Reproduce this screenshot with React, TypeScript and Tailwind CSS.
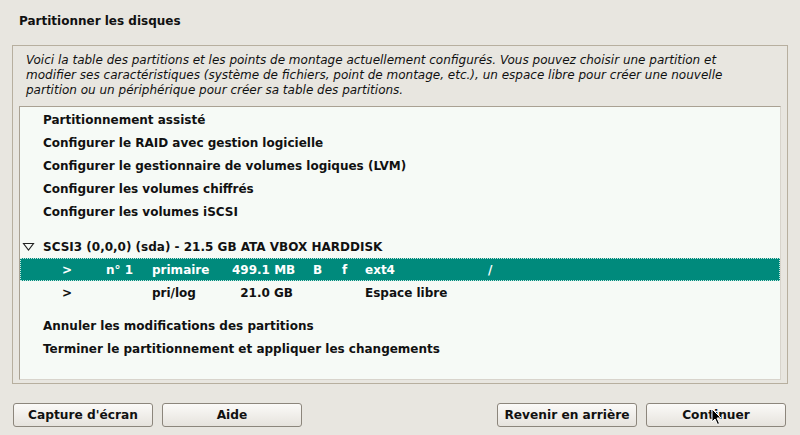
import React from 'react'

const menuTop = [
  'Partitionnement assisté',
  'Configurer le RAID avec gestion logicielle',
  'Configurer le gestionnaire de volumes logiques (LVM)',
  'Configurer les volumes chiffrés',
  'Configurer les volumes iSCSI',
]

const menuBottom = [
  'Annuler les modifications des partitions',
  'Terminer le partitionnement et appliquer les changements',
]

function Item({ label }: { label: string }) {
  return (
    <div className="h-[23px] flex items-center pl-[23px] whitespace-nowrap">{label}</div>
  )
}

function PartRow({
  selected,
  num,
  type,
  size,
  boot,
  fmt,
  fs,
  mount,
}: {
  selected?: boolean
  num: string
  type: string
  size: string
  boot: string
  fmt: string
  fs: string
  mount: string
}) {
  return (
    <div
      className={
        selected
          ? 'h-[23px] flex items-center whitespace-nowrap bg-[#008a7c] text-white outline-1 outline-dotted outline-[#c8e8e2] -outline-offset-1'
          : 'h-[23px] flex items-center whitespace-nowrap'
      }
    >
      <span className="w-[86px] pl-[42px]">&gt;</span>
      <span className="w-[46px]">{num}</span>
      <span className="w-[80px]">{type}</span>
      <span className="w-[61px] text-right">{size}</span>
      <span className="w-[20px]" />
      <span className="w-[29px]">{boot}</span>
      <span className="w-[23px]">{fmt}</span>
      <span className="w-[123px]">{fs}</span>
      <span>{mount}</span>
    </div>
  )
}

function Button({ label }: { label: string }) {
  return (
    <button className="w-[140px] h-[24px] rounded-[3px] border border-[#8c867c] bg-gradient-to-b from-[#fbfaf8] to-[#e6e3dd] text-[12.2px] font-bold text-[#111] flex items-center justify-center">
      {label}
    </button>
  )
}

export default function App() {
  return (
    <div className="w-[800px] h-[435px] bg-[#e8e6e0] font-['DejaVu_Sans',sans-serif] text-[#111] relative overflow-hidden">
      <div className="h-[45px] pl-[19px] pt-[12px] text-[12px] font-bold">Partitionner les disques</div>

      <div className="mx-[12px] w-[776px] h-[339px] border border-[#b7af9f] flex flex-col px-[6px] pb-[3px]">
        <p className="italic text-[12px] leading-[15px] pl-[7px] pt-[7px] h-[60px] whitespace-nowrap">
          Voici la table des partitions et les points de montage actuellement configurés. Vous pouvez choisir une partition et
          <br />
          modifier ses caractéristiques (système de fichiers, point de montage, etc.), un espace libre pour créer une nouvelle
          <br />
          partition ou un périphérique pour créer sa table des partitions.
        </p>

        <div className="flex-1 border border-[#a9a193] border-r-[#d8d4cc] border-b-[#d8d4cc] bg-[#f6faf6] text-[12px] font-bold pt-[1px]">
          {menuTop.map((m) => (
            <Item key={m} label={m} />
          ))}
          <div className="h-[12px]" />
          <div className="h-[23px] flex items-center whitespace-nowrap">
            <svg width="23" height="12" viewBox="0 0 23 12" className="shrink-0">
              <path d="M3.5 2.5 L13.5 2.5 L8.5 9 Z" fill="none" stroke="#222" strokeWidth="1.1" />
            </svg>
            <span>SCSI3 (0,0,0) (sda) - 21.5 GB ATA VBOX HARDDISK</span>
          </div>
          <PartRow selected num="n° 1" type="primaire" size="499.1 MB" boot="B" fmt="f" fs="ext4" mount="/" />
          <PartRow num="" type="pri/log" size="21.0 GB" boot="" fmt="" fs="Espace libre" mount="" />
          <div className="h-[10px]" />
          {menuBottom.map((m) => (
            <Item key={m} label={m} />
          ))}
        </div>
      </div>

      <div className="flex items-center px-[13px] pt-[19px]">
        <div className="flex gap-[9px]">
          <Button label="Capture d'écran" />
          <Button label="Aide" />
        </div>
        <div className="flex gap-[9px] ml-auto mr-[1px]">
          <Button label="Revenir en arrière" />
          <Button label="Continuer" />
        </div>
      </div>

      {/* mouse pointer */}
      <svg width="12" height="18" viewBox="0 0 12 18" className="absolute left-[711px] top-[408px]">
        <path d="M1 1 L1 14 L4 11 L6.5 16.5 L8.5 15.5 L6 10 L10 10 Z" fill="#000" stroke="#fff" strokeWidth="1" />
      </svg>
    </div>
  )
}
